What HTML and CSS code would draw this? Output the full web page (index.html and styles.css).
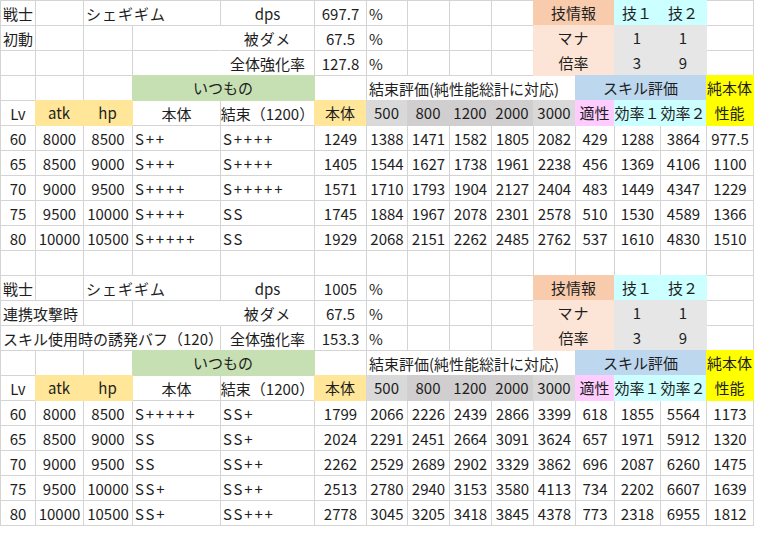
FILE: index.html
```html
<!DOCTYPE html>
<html lang="ja">
<head>
<meta charset="utf-8">
<title>シェギギム</title>
<link rel="stylesheet" href="styles.css">
</head>
<body>
<div class="sheet">
  <!-- row 0 -->
  <div class="c l">戦士</div><div class="c"></div><div class="c l s2 kana">シェギギム</div><div class="c">dps</div><div class="c">697.7</div><div class="c l">%</div><div class="c"></div><div class="c"></div><div class="c"></div><div class="c s2 f or">技情報</div><div class="c f cy">技１</div><div class="c f cy">技２</div><div class="c"></div>
  <!-- row 1 -->
  <div class="c l">初動</div><div class="c"></div><div class="c"></div><div class="c nob"></div><div class="c kana">被ダメ</div><div class="c">67.5</div><div class="c l">%</div><div class="c"></div><div class="c"></div><div class="c"></div><div class="c s2 f lor kana">マナ</div><div class="c f gr">1</div><div class="c f gr">1</div><div class="c"></div>
  <!-- row 2 -->
  <div class="c"></div><div class="c"></div><div class="c"></div><div class="c nob"></div><div class="c">全体強化率</div><div class="c">127.8</div><div class="c l">%</div><div class="c"></div><div class="c"></div><div class="c"></div><div class="c s2 f lor">倍率</div><div class="c f gr">3</div><div class="c f gr">9</div><div class="c"></div>
  <!-- row 3 -->
  <div class="c"></div><div class="c"></div><div class="c"></div><div class="c s2 f gn">いつもの</div><div class="c"></div><div class="c l s5">結束評価(純性能総計に対応)</div><div class="c s3 f bl">スキル評価</div><div class="c f ye">純本体</div>
  <!-- row 4 -->
  <div class="c">Lv</div><div class="c f ly">atk</div><div class="c f ly">hp</div><div class="c">本体</div><div class="c">結束（1200）</div><div class="c f ly">本体</div><div class="c f g1">500</div><div class="c f g2">800</div><div class="c f g2">1200</div><div class="c f g2">2000</div><div class="c f g1">3000</div><div class="c f pk">適性</div><div class="c f cy">効率１</div><div class="c f cy">効率２</div><div class="c f ye">性能</div>
  <!-- rows 5-9 -->
  <div class="c">60</div><div class="c">8000</div><div class="c">8500</div><div class="c l gd">S++</div><div class="c l gd">S++++</div><div class="c">1249</div><div class="c">1388</div><div class="c">1471</div><div class="c">1582</div><div class="c">1805</div><div class="c">2082</div><div class="c">429</div><div class="c">1288</div><div class="c">3864</div><div class="c">977.5</div>
  <div class="c">65</div><div class="c">8500</div><div class="c">9000</div><div class="c l gd">S+++</div><div class="c l gd">S++++</div><div class="c">1405</div><div class="c">1544</div><div class="c">1627</div><div class="c">1738</div><div class="c">1961</div><div class="c">2238</div><div class="c">456</div><div class="c">1369</div><div class="c">4106</div><div class="c">1100</div>
  <div class="c">70</div><div class="c">9000</div><div class="c">9500</div><div class="c l gd">S++++</div><div class="c l gd">S+++++</div><div class="c">1571</div><div class="c">1710</div><div class="c">1793</div><div class="c">1904</div><div class="c">2127</div><div class="c">2404</div><div class="c">483</div><div class="c">1449</div><div class="c">4347</div><div class="c">1229</div>
  <div class="c">75</div><div class="c">9500</div><div class="c">10000</div><div class="c l gd">S++++</div><div class="c l gd">SS</div><div class="c">1745</div><div class="c">1884</div><div class="c">1967</div><div class="c">2078</div><div class="c">2301</div><div class="c">2578</div><div class="c">510</div><div class="c">1530</div><div class="c">4589</div><div class="c">1366</div>
  <div class="c">80</div><div class="c">10000</div><div class="c">10500</div><div class="c l gd">S+++++</div><div class="c l gd">SS</div><div class="c">1929</div><div class="c">2068</div><div class="c">2151</div><div class="c">2262</div><div class="c">2485</div><div class="c">2762</div><div class="c">537</div><div class="c">1610</div><div class="c">4830</div><div class="c">1510</div>
  <!-- row 10 -->
  <div class="c"></div><div class="c"></div><div class="c"></div><div class="c"></div><div class="c"></div><div class="c"></div><div class="c"></div><div class="c"></div><div class="c"></div><div class="c"></div><div class="c"></div><div class="c"></div><div class="c"></div><div class="c"></div><div class="c"></div>
  <!-- row 11 -->
  <div class="c l">戦士</div><div class="c"></div><div class="c l s2 kana">シェギギム</div><div class="c">dps</div><div class="c">1005</div><div class="c l">%</div><div class="c"></div><div class="c"></div><div class="c"></div><div class="c s2 f or">技情報</div><div class="c f cy">技１</div><div class="c f cy">技２</div><div class="c"></div>
  <!-- row 12 -->
  <div class="c l s2">連携攻撃時</div><div class="c"></div><div class="c nob"></div><div class="c kana">被ダメ</div><div class="c">67.5</div><div class="c l">%</div><div class="c"></div><div class="c"></div><div class="c"></div><div class="c s2 f lor kana">マナ</div><div class="c f gr">1</div><div class="c f gr">1</div><div class="c"></div>
  <!-- row 13 -->
  <div class="c l s4">スキル使用時の誘発バフ（120）</div><div class="c">全体強化率</div><div class="c">153.3</div><div class="c l">%</div><div class="c"></div><div class="c"></div><div class="c"></div><div class="c s2 f lor">倍率</div><div class="c f gr">3</div><div class="c f gr">9</div><div class="c"></div>
  <!-- row 14 -->
  <div class="c"></div><div class="c"></div><div class="c"></div><div class="c s2 f gn">いつもの</div><div class="c"></div><div class="c l s5">結束評価(純性能総計に対応)</div><div class="c s3 f bl">スキル評価</div><div class="c f ye">純本体</div>
  <!-- row 15 -->
  <div class="c">Lv</div><div class="c f ly">atk</div><div class="c f ly">hp</div><div class="c">本体</div><div class="c">結束（1200）</div><div class="c f ly">本体</div><div class="c f g1">500</div><div class="c f g2">800</div><div class="c f g2">1200</div><div class="c f g2">2000</div><div class="c f g1">3000</div><div class="c f pk">適性</div><div class="c f cy">効率１</div><div class="c f cy">効率２</div><div class="c f ye">性能</div>
  <!-- rows 16-20 -->
  <div class="c">60</div><div class="c">8000</div><div class="c">8500</div><div class="c l gd">S+++++</div><div class="c l gd">SS+</div><div class="c">1799</div><div class="c">2066</div><div class="c">2226</div><div class="c">2439</div><div class="c">2866</div><div class="c">3399</div><div class="c">618</div><div class="c">1855</div><div class="c">5564</div><div class="c">1173</div>
  <div class="c">65</div><div class="c">8500</div><div class="c">9000</div><div class="c l gd">SS</div><div class="c l gd">SS+</div><div class="c">2024</div><div class="c">2291</div><div class="c">2451</div><div class="c">2664</div><div class="c">3091</div><div class="c">3624</div><div class="c">657</div><div class="c">1971</div><div class="c">5912</div><div class="c">1320</div>
  <div class="c">70</div><div class="c">9000</div><div class="c">9500</div><div class="c l gd">SS</div><div class="c l gd">SS++</div><div class="c">2262</div><div class="c">2529</div><div class="c">2689</div><div class="c">2902</div><div class="c">3329</div><div class="c">3862</div><div class="c">696</div><div class="c">2087</div><div class="c">6260</div><div class="c">1475</div>
  <div class="c">75</div><div class="c">9500</div><div class="c">10000</div><div class="c l gd">SS+</div><div class="c l gd">SS++</div><div class="c">2513</div><div class="c">2780</div><div class="c">2940</div><div class="c">3153</div><div class="c">3580</div><div class="c">4113</div><div class="c">734</div><div class="c">2202</div><div class="c">6607</div><div class="c">1639</div>
  <div class="c">80</div><div class="c">10000</div><div class="c">10500</div><div class="c l gd">SS+</div><div class="c l gd">SS+++</div><div class="c">2778</div><div class="c">3045</div><div class="c">3205</div><div class="c">3418</div><div class="c">3845</div><div class="c">4378</div><div class="c">773</div><div class="c">2318</div><div class="c">6955</div><div class="c">1812</div>
</div>
</body>
</html>
```

FILE: styles.css
```css
html, body {
  margin: 0;
  padding: 0;
  background: #ffffff;
}

.sheet {
  --grid: #d4d4d4;
  display: grid;
  grid-template-columns: 35px 48px 49px 88px 94px 52px 41px 42px 42px 42px 42px 39px 46px 46px 47px;
  grid-auto-rows: 25px;
  width: max-content;
  border-top: 1px solid var(--grid);
  border-left: 1px solid var(--grid);
  font-family: "Noto Sans CJK JP", "Noto Sans", sans-serif;
  font-size: 15px;
  color: #1e1e1e;
}

.c {
  box-sizing: border-box;
  display: flex;
  align-items: center;
  justify-content: center;
  min-width: 0;
  padding: 0 2px;
  border-right: 1px solid var(--grid);
  border-bottom: 1px solid var(--grid);
  white-space: nowrap;
  line-height: 1;
}

.l { justify-content: flex-start; }
.s2 { grid-column: span 2; }
.s3 { grid-column: span 3; }
.s4 { grid-column: span 4; }
.s5 { grid-column: span 5; }
.nob { border-right-color: transparent; }
.kana { letter-spacing: 1px; }
.gd { letter-spacing: 1.8px; }

/* filled cells hide the grid lines around them */
.f {
  margin: -1px 0 0 -1px;
  background: var(--fill);
  border-right-color: var(--fill);
  border-bottom-color: var(--fill);
}
.or  { --fill: #f8cbad; }
.lor { --fill: #fce4d6; }
.cy  { --fill: #ccffff; }
.gr  { --fill: #e7e6e6; }
.bl  { --fill: #bdd7ee; }
.ye  { --fill: #ffff00; }
.pk  { --fill: #ffccff; }
.gn  { --fill: #c6e0b4; }
.ly  { --fill: #ffe699; }
.g1  { --fill: #d9d9d9; }
.g2  { --fill: #d0cece; }
```
